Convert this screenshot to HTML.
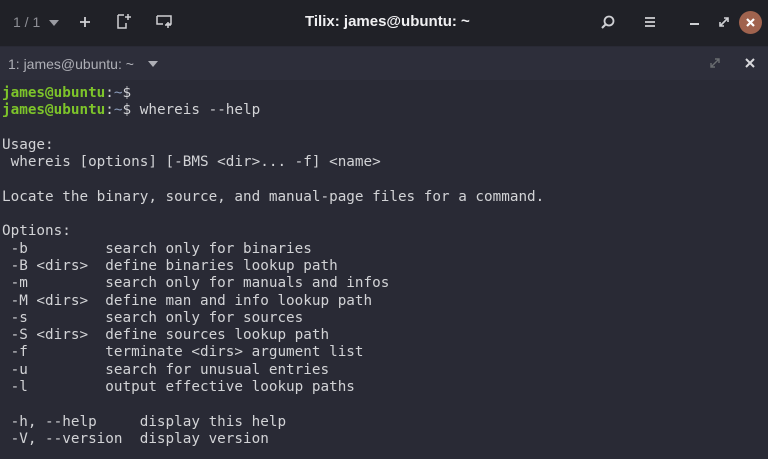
<!DOCTYPE html>
<html><head><style>
html,body{margin:0;padding:0;width:768px;height:459px;overflow:hidden;background:#292a35;}
#top{position:absolute;left:0;top:0;width:768px;height:46px;background:#202127;}
#tab{position:absolute;left:0;top:47px;width:768px;height:33px;background:#2d2e3a;}
.t{position:absolute;font-family:"Liberation Sans","DejaVu Sans",sans-serif;color:#c8c8cc;}
pre{position:absolute;left:2px;top:85px;margin:0;font-family:"DejaVu Sans Mono","Liberation Mono",monospace;font-size:14.3px;line-height:17.3px;color:#d2d3d6;}
.g{color:#7dc42a;font-weight:bold}
.b{color:#8a9ab8}
</style></head><body>
<div id="top"></div>
<div class="t" style="left:13px;top:14px;font-size:14px;color:#8e8f96">1 / 1</div>
<svg style="position:absolute;left:48px;top:19px" width="12" height="8"><path d="M1 1h10L6 7z" fill="#9a9ba2"/></svg>
<svg style="position:absolute;left:78px;top:15px" width="14" height="14"><path d="M7 2v10M2 7h10" stroke="#cfd0d4" stroke-width="1.8"/></svg>
<svg style="position:absolute;left:116px;top:13px" width="16" height="18"><path d="M2 2h6M2 2v13h8v-5M12 1v6M9 4h6" stroke="#cfd0d4" stroke-width="1.5" fill="none"/></svg>
<svg style="position:absolute;left:156px;top:14px" width="18" height="16"><path d="M1 2h14v8h-5M1 2v8h6M12 8v6M9 11h6" stroke="#cfd0d4" stroke-width="1.5" fill="none"/></svg>
<div class="t" style="left:305px;top:13px;font-size:15px;font-weight:bold;color:#f0f0f2">Tilix: james@ubuntu: ~</div>
<svg style="position:absolute;left:600px;top:14px" width="16" height="16"><circle cx="9" cy="7" r="4.5" stroke="#cfd0d4" stroke-width="1.8" fill="none"/><path d="M6 10l-4 4" stroke="#cfd0d4" stroke-width="2"/></svg>
<svg style="position:absolute;left:644px;top:16px" width="12" height="12"><path d="M1 2h10M1 6h10M1 10h10" stroke="#cfd0d4" stroke-width="1.8"/></svg>
<div style="position:absolute;left:690px;top:23px;width:9px;height:2px;background:#cfd0d4"></div>
<svg style="position:absolute;left:718px;top:16px" width="12" height="12"><path d="M2 10l8-8M6 2h4v4M2 6v4h4" stroke="#cfd0d4" stroke-width="1.6" fill="none"/></svg>
<div style="position:absolute;left:739px;top:11px;width:23px;height:23px;border-radius:50%;background:#a0634e"></div>
<svg style="position:absolute;left:745px;top:17px" width="11" height="11"><path d="M2 2l7 7M9 2l-7 7" stroke="#fff" stroke-width="2.2"/></svg>
<div id="tab"></div>
<div class="t" style="left:8px;top:56px;font-size:14px;color:#aeafb6">1: james@ubuntu: ~</div>
<svg style="position:absolute;left:147px;top:60px" width="12" height="8"><path d="M1 1h10L6 7z" fill="#aeafb6"/></svg>
<svg style="position:absolute;left:710px;top:58px" width="10" height="10"><path d="M1 9l8-8M5 1h4v4M1 5v4h4" stroke="#6a6d70" stroke-width="1.4" fill="none"/></svg>
<svg style="position:absolute;left:745px;top:58px" width="10" height="10"><path d="M1 1l8 8M9 1l-8 8" stroke="#d8d8dc" stroke-width="2"/></svg>
<pre><span class="g">james@ubuntu</span>:<span class="b">~</span>$
<span class="g">james@ubuntu</span>:<span class="b">~</span>$ whereis --help

Usage:
 whereis [options] [-BMS &lt;dir&gt;... -f] &lt;name&gt;

Locate the binary, source, and manual-page files for a command.

Options:
 -b         search only for binaries
 -B &lt;dirs&gt;  define binaries lookup path
 -m         search only for manuals and infos
 -M &lt;dirs&gt;  define man and info lookup path
 -s         search only for sources
 -S &lt;dirs&gt;  define sources lookup path
 -f         terminate &lt;dirs&gt; argument list
 -u         search for unusual entries
 -l         output effective lookup paths

 -h, --help     display this help
 -V, --version  display version</pre>
</body></html>
